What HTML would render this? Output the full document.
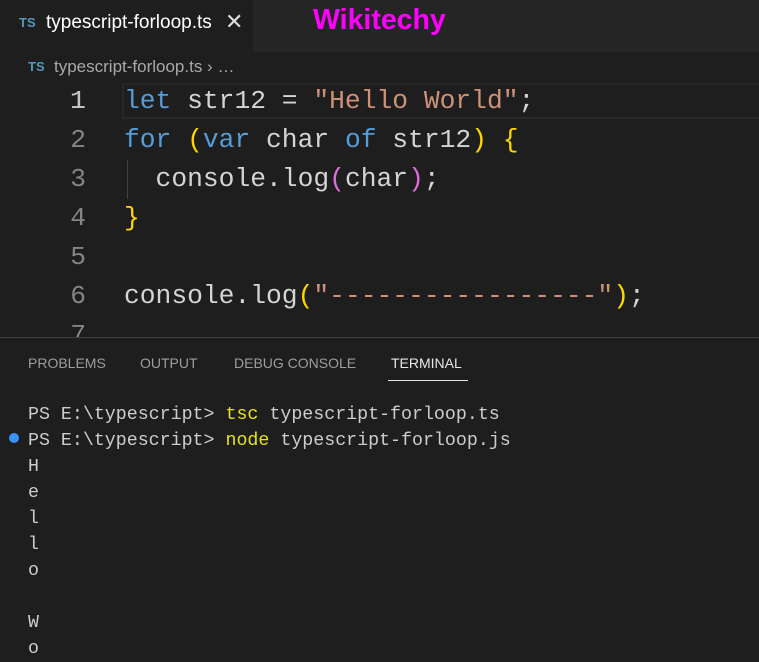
<!DOCTYPE html>
<html><head><style>
body{margin:0;width:759px;height:648px;background:#1e1e1e;overflow:hidden;position:relative;font-family:"Liberation Sans",sans-serif}
.abs{position:absolute;white-space:pre}
.mono{font-family:"Liberation Mono",monospace}
.code{font-size:26.3px;line-height:39px}
.term{font-size:18.3px;color:#cccccc}
</style></head><body>
<div class="abs" style="left:0;top:0;width:759px;height:52px;background:#252526"></div>
<div class="abs" style="left:0;top:0;width:253px;height:52px;background:#1e1e1e"></div>
<div class="abs" style="left:19px;top:15px;font-size:13px;font-weight:bold;color:#519aba">TS</div>
<div class="abs" style="left:46px;top:12px;font-size:19px;color:#ffffff">typescript-forloop.ts</div>
<div class="abs" style="left:225px;top:9px;font-size:22px;color:#ddd">✕</div>
<div class="abs" style="left:313px;top:4px;font-size:28.5px;font-weight:bold;color:#ff00ff">Wikitechy</div>
<div class="abs" style="left:28px;top:59px;font-size:13px;font-weight:bold;color:#519aba">TS</div>
<div class="abs" style="left:54px;top:57px;font-size:17px;color:#a9a9a9">typescript-forloop.ts › …</div>
<div class="abs" style="left:122px;top:83px;width:640px;height:36px;border:2px solid #282828;box-sizing:border-box"></div>
<div class="abs mono code" style="left:60px;top:82px;color:#858585;text-align:right;width:26px">1
2
3
4
5
6
7</div>
<div class="abs mono code" style="left:70px;top:82px;color:#c6c6c6">1</div>
<div class="abs mono code" style="left:124px;top:82px;color:#d4d4d4"><span style="color:#569cd6">let</span> str12 = <span style="color:#ce9178">"Hello World"</span>;
<span style="color:#569cd6">for</span> <span style="color:#ffd700">(</span><span style="color:#569cd6">var</span> char <span style="color:#569cd6">of</span> str12<span style="color:#ffd700">)</span> <span style="color:#ffd700">{</span>
  console.log<span style="color:#da70d6">(</span>char<span style="color:#da70d6">)</span>;
<span style="color:#ffd700">}</span>

console.log<span style="color:#ffd700">(</span><span style="color:#ce9178">"-----------------"</span><span style="color:#ffd700">)</span>;</div>
<div class="abs" style="left:127px;top:160px;width:1px;height:39px;background:#404040"></div>
<div class="abs" style="left:0;top:337px;width:759px;height:311px;background:#1e1e1e;border-top:1px solid #414141"></div>
<div class="abs" style="left:28px;top:355px;font-size:14px;color:#9d9d9d">PROBLEMS</div>
<div class="abs" style="left:140px;top:355px;font-size:14px;color:#9d9d9d">OUTPUT</div>
<div class="abs" style="left:234px;top:355px;font-size:14px;color:#9d9d9d">DEBUG CONSOLE</div>
<div class="abs" style="left:391px;top:355px;font-size:14px;color:#e7e7e7">TERMINAL</div>
<div class="abs" style="left:388px;top:380px;width:80px;height:1px;background:#e7e7e7"></div>
<div class="abs" style="left:9px;top:433px;width:10px;height:10px;border-radius:50%;background:#3794ff"></div>
<div class="abs mono term" style="left:28px;top:402px;line-height:26px">PS E:\typescript&gt; <span style="color:#e5e510">tsc</span> typescript-forloop.ts
PS E:\typescript&gt; <span style="color:#e5e510">node</span> typescript-forloop.js
H
e
l
l
o

W
o</div>
</body></html>
